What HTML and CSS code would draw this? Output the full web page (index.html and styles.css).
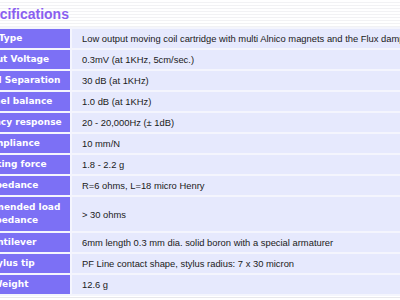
FILE: index.html
```html
<!DOCTYPE html>
<html>
<head>
<meta charset="utf-8">
<link rel="stylesheet" href="styles.css">
</head>
<body>
<div class="page">
  <div class="header">
    <h2 class="title">Specifications</h2>
  </div>
  <table class="specs">
    <colgroup><col class="c-label"><col class="c-value"></colgroup>
    <tr><th>Type</th><td>Low output moving coil cartridge with multi Alnico magnets and the Flux damper</td></tr>
    <tr><th>Output Voltage</th><td>0.3mV (at 1KHz, 5cm/sec.)</td></tr>
    <tr><th>Channel Separation</th><td>30 dB (at 1KHz)</td></tr>
    <tr><th>Channel balance</th><td>1.0 dB (at 1KHz)</td></tr>
    <tr><th>Frequency response</th><td>20 - 20,000Hz (± 1dB)</td></tr>
    <tr><th>Compliance</th><td>10 mm/N</td></tr>
    <tr><th>Tracking force</th><td>1.8 - 2.2 g</td></tr>
    <tr><th>Impedance</th><td>R=6 ohms, L=18 micro Henry</td></tr>
    <tr class="tall"><th>Recommended load impedance</th><td>&gt; 30 ohms</td></tr>
    <tr><th>Cantilever</th><td>6mm length 0.3 mm dia. solid boron with a special armaturer</td></tr>
    <tr><th>Stylus tip</th><td>PF Line contact shape, stylus radius: 7 x 30 micron</td></tr>
    <tr><th>Weight</th><td>12.6 g</td></tr>
  </table>
  <div class="footer"></div>
</div>
</body>
</html>
```
FILE: styles.css
```css
html, body {
  margin: 0;
  padding: 0;
  background: #ffffff;
  overflow: hidden;
}
body {
  font-family: "DejaVu Sans", Verdana, sans-serif;
}
.page {
  width: 400px;
  height: 300px;
  overflow: hidden;
}
.header {
  height: 27px;
  background: repeating-linear-gradient(to bottom, #ffffff 0, #ffffff 2px, #f2f2f4 2px, #f2f2f4 3px);
  overflow: hidden;
  white-space: nowrap;
}
.title {
  margin: 0 0 0 -26px;
  padding-top: 5px;
  font-family: "Liberation Sans", Arial, sans-serif;
  font-size: 14px;
  line-height: 18px;
  font-weight: bold;
  color: #8a5ff0;
}
.specs {
  margin-left: -46px;
  width: 560px;
  table-layout: fixed;
  border-collapse: separate;
  border-spacing: 2px;
  background: #f4f5fd;
}
.c-label { width: 114px; }
.c-value { width: auto; }
.specs th {
  padding: 3px 6px 3px 1px;
  background: #7c70f5;
  color: #ffffff;
  font-size: 9px;
  font-weight: bold;
  line-height: 13px;
  text-align: center;
  vertical-align: middle;
}
.specs td {
  padding: 3px 0 3px 10px;
  background: #e6e9fd;
  color: #1a1a1a;
  font-family: "Liberation Sans", Arial, sans-serif;
  font-size: 9.4px;
  line-height: 13px;
  white-space: nowrap;
  overflow: hidden;
  vertical-align: middle;
}
.specs .tall th, .specs .tall td {
  padding-top: 4px;
  padding-bottom: 4px;
}
.footer {
  height: 1px;
  background: #e8e8ec;
  margin-top: 1px;
}
```
